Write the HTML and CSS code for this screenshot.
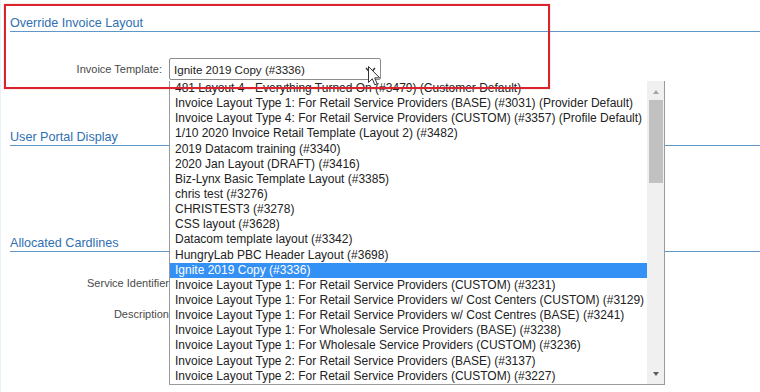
FILE: index.html
```html
<!DOCTYPE html>
<html>
<head>
<meta charset="utf-8">
<link rel="stylesheet" href="styles.css">
</head>
<body>
<div class="page">
  <section class="sec">
    <h2 class="sec-title first">Override Invoice Layout</h2>
    <div class="field">
      <span class="field-label">Invoice Template:</span>
      <div class="select">
        <span class="select-value">Ignite 2019 Copy (#3336)</span>
        <svg class="chev" width="11" height="7" viewBox="0 0 11 7"><path d="M1 1 L5.5 6 L10 1" fill="none" stroke="#333" stroke-width="1.4"/></svg>
      </div>
    </div>
  </section>
  <section class="sec">
    <h2 class="sec-title portal">User Portal Display</h2>
  </section>
  <section class="sec">
    <h2 class="sec-title cards">Allocated Cardlines</h2>
    <div class="field wide first-row">
      <span class="field-label">Service Identifier:</span>
    </div>
    <div class="field wide second-row">
      <span class="field-label">Description:</span>
    </div>
  </section>

  <div class="dropdown">
    <ul class="options">
      <li>481 Layout 4 - Everything Turned On (#3479) (Customer Default)</li>
      <li>Invoice Layout Type 1: For Retail Service Providers (BASE) (#3031) (Provider Default)</li>
      <li>Invoice Layout Type 4: For Retail Service Providers (CUSTOM) (#3357) (Profile Default)</li>
      <li>1/10 2020 Invoice Retail Template (Layout 2) (#3482)</li>
      <li>2019 Datacom training (#3340)</li>
      <li>2020 Jan Layout (DRAFT) (#3416)</li>
      <li>Biz-Lynx Basic Template Layout (#3385)</li>
      <li>chris test (#3276)</li>
      <li>CHRISTEST3 (#3278)</li>
      <li>CSS layout (#3628)</li>
      <li>Datacom template layout (#3342)</li>
      <li>HungryLab PBC Header Layout (#3698)</li>
      <li class="selected">Ignite 2019 Copy (#3336)</li>
      <li>Invoice Layout Type 1: For Retail Service Providers (CUSTOM) (#3231)</li>
      <li>Invoice Layout Type 1: For Retail Service Providers w/ Cost Centers (CUSTOM) (#3129)</li>
      <li>Invoice Layout Type 1: For Retail Service Providers w/ Cost Centres (BASE) (#3241)</li>
      <li>Invoice Layout Type 1: For Wholesale Service Providers (BASE) (#3238)</li>
      <li>Invoice Layout Type 1: For Wholesale Service Providers (CUSTOM) (#3236)</li>
      <li>Invoice Layout Type 2: For Retail Service Providers (BASE) (#3137)</li>
      <li>Invoice Layout Type 2: For Retail Service Providers (CUSTOM) (#3227)</li>
    </ul>
    <div class="scrollbar">
      <div class="sb-arrow up"></div>
      <div class="sb-thumb"></div>
      <div class="sb-fill"></div>
      <div class="sb-arrow down"></div>
    </div>
  </div>

  <div class="annot"></div>

  <svg class="cursor" width="13" height="21" viewBox="0 0 13 21">
    <path d="M0.5 0.5 L0.5 16.5 L4.3 12.8 L6.8 18.8 L9.2 17.8 L6.7 11.9 L11.7 11.9 Z" fill="#fff" stroke="#333" stroke-width="1"/>
  </svg>
</div>
</body>
</html>
```

FILE: styles.css
```css
html, body {
  margin: 0;
  padding: 0;
  background: #ffffff;
}

body {
  font-family: "Liberation Sans", Arial, sans-serif;
  width: 760px;
  height: 392px;
  overflow: hidden;
}

.page {
  position: relative;
  height: 392px;
  padding-top: 16px;
  padding-left: 9px;
  border-left: 1px solid #e6f4f9;
  box-sizing: border-box;
}

.sec {
  display: block;
}

.sec-title {
  margin: 0;
  font-weight: normal;
  font-size: 12.6px;
  line-height: 15px;
  color: #2f6fb2;
  border-bottom: 1px solid #5f97c9;
}

.sec-title.portal {
  margin-top: 50px;
}

.sec-title.cards {
  margin-top: 90px;
}

.field {
  display: flex;
  align-items: center;
  gap: 7px;
  height: 22px;
  margin-top: 26px;
}

.field-label {
  width: 152px;
  text-align: right;
  font-size: 11px;
  color: #4a4a4a;
  white-space: nowrap;
}

.field.wide .field-label {
  width: 162px;
}

.field.first-row {
  margin-top: 20px;
}

.field.second-row {
  margin-top: 9px;
}

.select {
  width: 212px;
  height: 22px;
  box-sizing: border-box;
  border: 1px solid #8c8c8c;
  border-radius: 2px;
  display: flex;
  align-items: center;
  justify-content: space-between;
  padding: 0 4px 0 4px;
  background: #fff;
}

.select-value {
  font-size: 11.6px;
  color: #222;
}

.chev {
  display: block;
  margin-top: 2px;
}

.dropdown {
  position: absolute;
  left: 168px;
  top: 81px;
  width: 496px;
  height: 304px;
  box-sizing: border-box;
  border: 1px solid #9a9a9a;
  border-top: none;
  background: #fff;
  display: flex;
  overflow: hidden;
}

.options {
  list-style: none;
  margin: 0;
  padding: 0;
  flex: 1;
  font-size: 12px;
  color: #222;
}

.options li {
  height: 15.15px;
  line-height: 15.15px;
  padding-left: 5px;
  white-space: nowrap;
}

.options li.selected {
  background: #3390f5;
  color: #ffffff;
}

.scrollbar {
  width: 17px;
  background: #f0f0f0;
  display: flex;
  flex-direction: column;
  align-items: center;
}

.sb-arrow {
  width: 0;
  height: 0;
  border-left: 3.5px solid transparent;
  border-right: 3.5px solid transparent;
}

.sb-arrow.up {
  margin-top: 9px;
  border-bottom: 4px solid #a3a3a3;
}

.sb-arrow.down {
  margin-bottom: 8px;
  border-top: 4px solid #5a5a5a;
}

.sb-thumb {
  width: 14px;
  height: 83px;
  margin-top: 6px;
  background: #c1c1c1;
}

.sb-fill {
  flex: 1;
}

.annot {
  position: absolute;
  left: 3px;
  top: 4px;
  width: 546px;
  height: 85px;
  box-sizing: border-box;
  border: 2px solid #d9232d;
  box-shadow: 0 0 1px rgba(217, 35, 45, 0.5);
  pointer-events: none;
}

.cursor {
  position: absolute;
  left: 367px;
  top: 66px;
}
```
